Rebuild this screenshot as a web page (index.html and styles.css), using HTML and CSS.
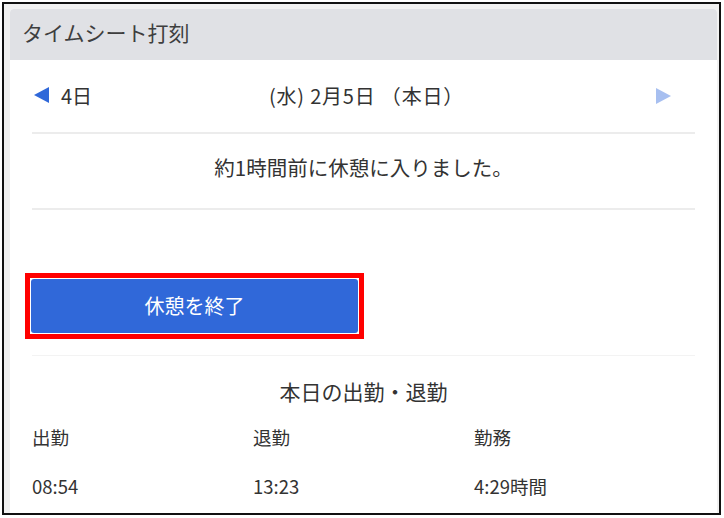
FILE: index.html
```html
<html>
<head>
  <meta charset="utf-8">
  <link rel="stylesheet" href="styles.css">
</head>
<body>
<div class="frame">
  <div class="panel">
    <div class="panel-header">タイムシート打刻</div>
    <div class="panel-body">
      <div class="day-nav">
        <span class="prev"><span class="tri tri-left"></span>4日</span>
        <span class="today">(水) 2月5日 （本日）</span>
        <span class="next"><span class="tri tri-right"></span></span>
      </div>
      <div class="status">約1時間前に休憩に入りました。</div>
      <div class="actions">
        <div class="highlight">
          <button class="btn-end">休憩を終了</button>
        </div>
      </div>
      <div class="summary">
        <div class="summary-title">本日の出勤・退勤</div>
        <div class="summary-grid">
          <div class="label">出勤</div>
          <div class="label">退勤</div>
          <div class="label">勤務</div>
          <div class="value">08:54</div>
          <div class="value">13:23</div>
          <div class="value">4:29時間</div>
        </div>
      </div>
    </div>
  </div>
</div>
</body>
</html>
```

FILE: styles.css
```css
html, body {
  margin: 0;
  background: #fff;
  font-family: "Noto Sans CJK JP", "Noto Sans", sans-serif;
  color: #333;
}
.frame {
  margin: 2px 0 0 2px;
  width: 707px;
  height: 504px;
  border: 2px solid #111;
  background: #f1f1f1;
  overflow: hidden;
  padding: 5px 2px 0 6px;
}
.panel {
  background: #fff;
  border-radius: 4px 4px 0 0;
  height: 100%;
}
.panel-header {
  height: 51px;
  line-height: 46px;
  background: #e0e1e5;
  border-radius: 4px 4px 0 0;
  padding-left: 12px;
  font-size: 21px;
  color: #3e3e3e;
}
.panel-body {
  padding: 0 22px;
}
.day-nav {
  display: flex;
  align-items: center;
  justify-content: space-between;
  height: 72px;
  border-bottom: 2px solid #ececec;
  font-size: 20px;
}
.prev, .next {
  display: flex;
  align-items: center;
  width: 60px;
}
.prev { padding-left: 2px; }
.next { justify-content: flex-end; padding-right: 24px; width: 38px; }
.prev, .today { margin-bottom: 2px; }
.tri {
  display: inline-block;
  width: 0;
  height: 0;
  border-top: 8px solid transparent;
  border-bottom: 8px solid transparent;
}
.tri-left {
  border-right: 15px solid #2f68d9;
  margin-right: 12px;
}
.tri-right {
  border-left: 15px solid #a7bff0;
}
.today {
  margin-left: 6px;
  letter-spacing: 0.8px;
}
.status {
  height: 74px;
  line-height: 66px;
  text-align: center;
  font-size: 20.5px;
  border-bottom: 2px solid #ececec;
}
.actions {
  padding: 63px 0 16px;
  border-bottom: 1px solid #f3f3f3;
}
.highlight {
  width: 327px;
  margin-left: -7px;
  border: 5px solid #f00;
  padding: 1px;
}
.btn-end {
  display: block;
  width: 327px;
  height: 54px;
  padding-bottom: 3px;
  background: #3068d9;
  color: #fff;
  border: 0;
  border-radius: 3px;
  font-family: inherit;
  font-size: 20px;
}
.summary-title {
  text-align: center;
  font-size: 21px;
  padding: 21px 0 0;
  line-height: 28px;
}
.summary-grid {
  display: grid;
  grid-template-columns: 221px 221px 221px;
  font-size: 18.5px;
}
.label {
  padding-top: 19px;
  line-height: 26px;
}
.value {
  padding-top: 23px;
  line-height: 26px;
}
```
